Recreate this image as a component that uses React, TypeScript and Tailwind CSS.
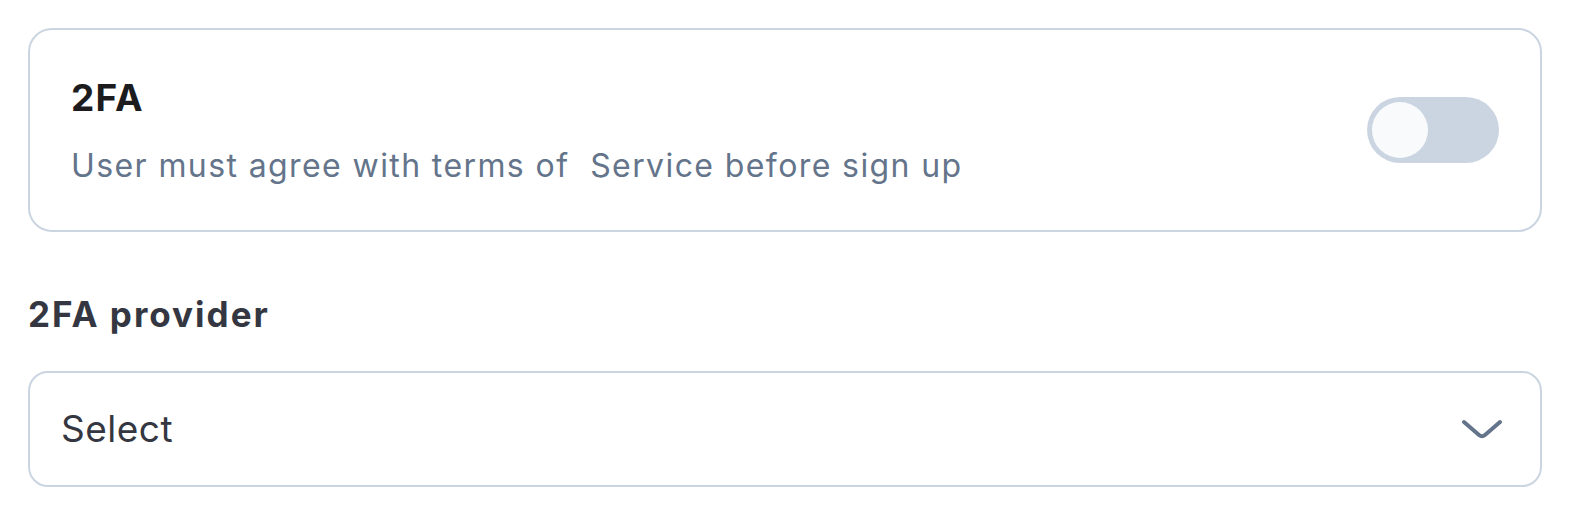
import React from "react";

export default function App() {
  return (
    <div className="w-[1572px] h-[514px] bg-white pt-[28px] pl-[28px] pr-[30px]" style={{ fontFamily: "Inter, 'Noto Sans', sans-serif" }}>
      <div className="h-[204px] border-2 border-[#cbd5e1] rounded-[24px] flex items-center justify-between pl-[41px] pr-[41px]">
        <div className="flex flex-col gap-[20px] pt-[4px]">
          <div className="text-[37px] leading-[48px] font-bold text-[#1c1c1e] tracking-[1.2px]">2FA</div>
          <div className="text-[32px] leading-[48px] text-[#64748b] tracking-[1.4px]">
            User must agree with terms of&nbsp; Service before sign up
          </div>
        </div>
        <div className="w-[132px] h-[66px] rounded-full bg-[#cbd5e1] p-[5px] flex items-center">
          <div className="w-[56px] h-[56px] rounded-full bg-[#f8fafc]" />
        </div>
      </div>
      <div className="mt-[60px] text-[35px] leading-[44px] font-bold text-[#343741] tracking-[2px]">2FA provider</div>
      <div className="mt-[35px] h-[116px] border-2 border-[#cbd5e1] rounded-[20px] flex items-center justify-between pl-[31px] pr-[36px]">
        <span className="text-[37px] text-[#343741] tracking-[0.5px]">Select</span>
        <svg width="44" height="20" viewBox="0 0 44 20" fill="none">
          <path d="M4 3 L19 16 Q22 18.5 25 16 L40 3" stroke="#64748b" strokeWidth="4" strokeLinecap="round" strokeLinejoin="round" />
        </svg>
      </div>
    </div>
  );
}
